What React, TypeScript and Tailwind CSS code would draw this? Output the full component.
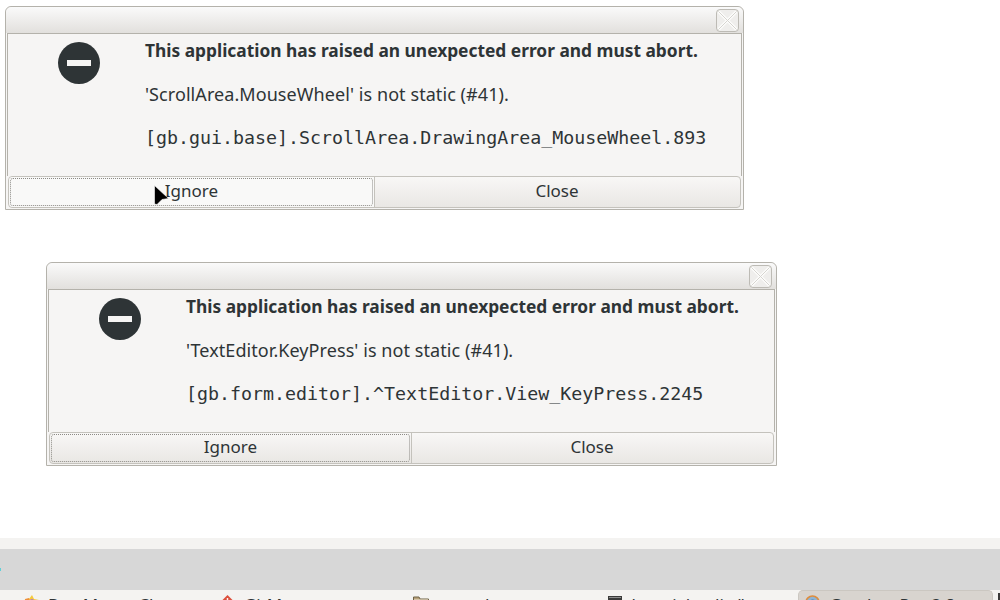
import React from 'react';

const sans = { fontFamily: '"Noto Sans", "Open Sans", sans-serif' };

type DialogProps = {
  className: string;
  message: string;
  where: string;
  ignoreClass: string;
};

const Dialog: React.FC<DialogProps> = ({ className, message, where, ignoreClass }) => (
  <div className={`absolute h-[204px] flex flex-col border border-[#b4b2ab] rounded-t-[6px] bg-[#f6f5f4] px-[2px] pb-[1px] ${className}`}>
    <div className="h-[26px] flex justify-end items-start pt-[2px] -mx-[2px] pr-[4px] rounded-t-[6px] bg-gradient-to-b from-[#fafafa] to-[#e2e0dd] shrink-0">
      <div className="w-[23px] h-[23px] border border-[#bdbbb5] rounded-[4px] bg-[#efeeec] flex items-center justify-center">
        <svg width="21" height="21" viewBox="0 0 21 21">
          <path d="M1.5 1.5 L19.5 19.5 M19.5 1.5 L1.5 19.5" stroke="#fdfdfc" strokeWidth="3" />
          <path d="M1.5 1.5 L19.5 19.5 M19.5 1.5 L1.5 19.5" stroke="#d6d4cf" strokeWidth="1" />
        </svg>
      </div>
    </div>
    <div className="flex-1 flex border-t border-x border-[#b4b2ab] -mx-[1px] px-[1px]">
      <div className="w-[136px] shrink-0 pl-[49px] pt-[8px]">
        <div className="w-[42px] h-[42px] rounded-full bg-[#2e3436] flex items-center justify-center">
          <div className="w-[24px] h-[6px] bg-[#f6f5f4]" />
        </div>
      </div>
      <div className="flex-1 text-[#2e3436]">
        <p className="font-bold text-[17.35px] leading-[24px] pt-[4px]" style={sans}>
          This application has raised an unexpected error and must abort.
        </p>
        <p className="text-[18px] leading-[22px] mt-[21px] tracking-[0.07px]" style={sans}>{message}</p>
        <p className="font-['DejaVu_Sans_Mono',monospace] text-[18.3px] leading-[22px] mt-[22px] whitespace-pre">{where}</p>
      </div>
    </div>
    <div className="h-[32px] flex border border-[#c4c2bc] rounded-[4px] bg-gradient-to-b from-[#f8f7f6] to-[#e9e7e4] text-[#2e3436] text-[17px] shrink-0" style={sans}>
      <div className={`shrink-0 border-r border-[#c4c2bc] p-[1px] ${ignoreClass}`}>
        <div className="h-full pb-[2px] border border-dotted border-[#8c8a85] rounded-[3px] flex items-center justify-center">Ignore</div>
      </div>
      <div className="flex-1 flex items-center justify-center pb-[2px] pr-[1px]">Close</div>
    </div>
  </div>
);

const Star = () => (
  <svg width="15" height="15" viewBox="0 0 15 15">
    <path d="M8 0 L10 4 L15 5 L12 9 L4 9 L0 5 L5 4 Z" fill="#f5c93c" />
    <path d="M1 4 L5 3 L6 7 L1 7 Z" fill="#ee8f3a" />
    <circle cx="8" cy="6" r="2" fill="#b77bc4" />
  </svg>
);

const GitIcon = () => (
  <svg width="15" height="15" viewBox="0 0 15 15">
    <path d="M7.5 0 L15 7.5 L7.5 15 L0 7.5 Z" fill="#dc4f3c" />
    <path d="M7.5 3 L7.5 12" stroke="#f6f5f4" strokeWidth="1.5" />
  </svg>
);

const FolderIcon = () => (
  <svg width="16" height="15" viewBox="0 0 16 15">
    <path d="M0.5 1 H6 L7 3 H15.5 V14 H0.5 Z" fill="#b9a27a" stroke="#6f6247" />
    <path d="M1 4 H15" stroke="#efe7d4" />
  </svg>
);

const TerminalIcon = () => (
  <svg width="14" height="15" viewBox="0 0 14 15">
    <rect width="14" height="15" fill="#3a3a3a" />
    <rect x="1" y="1" width="12" height="1" fill="#8d8d8d" />
  </svg>
);

const GambasIcon = () => (
  <svg width="15" height="15" viewBox="0 0 15 15">
    <circle cx="7.5" cy="7.5" r="6.5" fill="#8fb4d4" stroke="#de8d3e" strokeWidth="1.6" />
    <circle cx="7.5" cy="8" r="3" fill="none" stroke="#3f78ad" strokeWidth="1.2" />
  </svg>
);

export default function App() {
  return (
    <div className="relative w-[1000px] h-[600px] overflow-hidden bg-white">
      <Dialog
        className="left-[5px] top-[6px] w-[739px]"
        message="'ScrollArea.MouseWheel' is not static (#41)."
        where="[gb.gui.base].ScrollArea.DrawingArea_MouseWheel.893"
        ignoreClass="w-[366px] bg-[#f9f9f8] rounded-l-[4px]"
      />
      <Dialog
        className="left-[46px] top-[262px] w-[731px]"
        message="'TextEditor.KeyPress' is not static (#41)."
        where="[gb.form.editor].^TextEditor.View_KeyPress.2245"
        ignoreClass="w-[362px]"
      />

      {/* mouse pointer over the first dialog */}
      <svg className="absolute left-[153px] top-[185px]" width="17" height="21" viewBox="0 0 17 21">
        <path d="M1.5 0.5 L15.5 13.5 L9 14.5 L4 19.5 L1.5 19 Z" fill="#000" stroke="#fff" strokeWidth="0.6" />
      </svg>

      <div className="absolute inset-x-0 bottom-0 h-[62px] flex flex-col bg-[#f4f3f1]">
        <div className="h-[11px] shrink-0" />
        <div className="h-[41px] shrink-0 bg-[#d7d7d7] flex items-center">
          <div className="w-[1px] h-[3px] bg-[#5fd0d8]" />
        </div>
        <div className="h-[10px] flex pl-[24px] overflow-hidden text-[#2e3436] text-[17px] leading-[20px] whitespace-nowrap" style={sans}>
          <div className="w-[196px] flex gap-[9px] pt-[5px]"><Star /><span>Bee Mome Chat</span></div>
          <div className="w-[193px] flex gap-[9px] pt-[5px]"><GitIcon /><span>GitM</span></div>
          <div className="w-[196px] flex gap-[11px] pt-[6px]"><FolderIcon /><span className="-mt-[1px]">sound</span></div>
          <div className="w-[190px] flex gap-[9px] pt-[6px]"><TerminalIcon /><span className="-mt-[1px]">benoit/audio/k</span></div>
          <div className="w-[195px] flex gap-[9px] pt-[4px] pl-[6px] bg-[#d8d4cf] rounded-t-[5px] border-t border-x border-[#cbc7c1]"><GambasIcon /><span>Gambas Pro 3.8</span></div>
          <div className="ml-[5px] mt-[3px] w-[2px] h-[7px] bg-[#3a3a3a]" />
        </div>
      </div>
    </div>
  );
}
